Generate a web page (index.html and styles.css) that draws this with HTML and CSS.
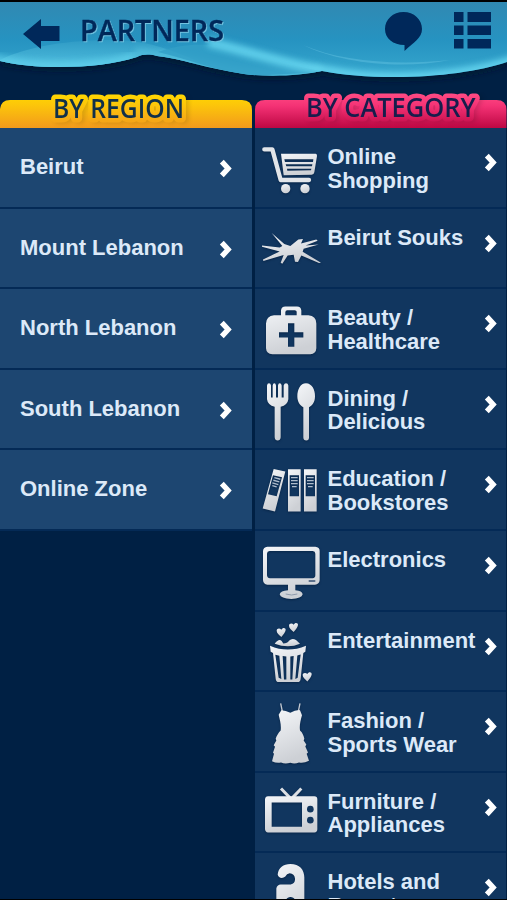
FILE: index.html
```html
<!DOCTYPE html>
<html>

<head>
	<meta charset="utf-8">
	<meta name="viewport" content="width=device-width, initial-scale=1">
	<title>Partners</title>
	<link rel="stylesheet" href="styles.css">
</head>

<body>
	<!-- shared paints and shapes -->
	<svg class="defs">
		<defs>
			<linearGradient id="metal" x1="0" y1="0" x2="0.3" y2="1">
				<stop offset="0" stop-color="#f4f6f9" />
				<stop offset="1" stop-color="#cdd0d5" />
			</linearGradient>
			<symbol id="chevron" viewBox="0 0 12 18">
				<path d="M2.500 2.500 L8.500 9 L2.500 15.500" fill="none" stroke="#fff" stroke-width="5" />
			</symbol>
			<path id="heart" d="M0 15 C-7 9 -14 3 -14 -4 C-14 -11 -5 -13 0 -7 C4 -15 14 -13 13 -6 C12 1 6 8 0 15 Z" />
		</defs>
	</svg>

	<header class="header">
		<svg class="waves" viewBox="0 0 507 98">
			<defs>
				<linearGradient id="sky" x1="0" y1="0" x2="0" y2="1">
					<stop offset="0" stop-color="#3188b1" />
					<stop offset="0.5" stop-color="#2693c1" />
					<stop offset="1" stop-color="#38a9cf" />
				</linearGradient>
				<linearGradient id="leftWave" gradientUnits="userSpaceOnUse" x1="0" y1="38" x2="0" y2="68">
					<stop offset="0" stop-color="#2d98c3" />
					<stop offset="1" stop-color="#50bfdf" />
				</linearGradient>
				<clipPath id="sea">
					<path d="M0 2 H507 V62 C480 71 440 77 395 77 C365 77 344 75 322 71 C300 76 267 77 244 74 C208 69 180 58 157 56 C149 54 143 54 137 57 C115 64 88 67 60 67 C35 67 18 65 0 61 Z" />
				</clipPath>
				<filter id="soft" x="-20%" y="-50%" width="140%" height="200%">
					<feGaussianBlur stdDeviation="3" />
				</filter>
			</defs>
			<rect width="507" height="98" fill="#002044" />
			<path d="M0 61 C18 65 35 67 60 67 C88 67 115 64 137 57 C143 54 149 54 157 56 C180 58 208 69 244 74 C267 77 300 76 322 71 C344 75 365 77 395 77 C440 77 480 71 507 62" fill="none" stroke="#00142b" stroke-width="5" filter="url(#soft)" />
			<g clip-path="url(#sea)">
				<rect width="507" height="80" fill="url(#sky)" />
				<path d="M0 60 C28 46 70 40 112 40 C148 40 170 50 200 62 L60 75 H0 Z" fill="url(#leftWave)" />
				<path d="M-10 59 C18 65 35 67 60 67 C88 67 115 64 137 57" fill="none" stroke="#62d1ec" stroke-width="11" opacity="0.75" filter="url(#soft)" />
				<path d="M135 54 C180 58 208 69 244 74 C267 77 300 76 322 71" fill="none" stroke="#51bddb" stroke-width="12" opacity="0.8" filter="url(#soft)" />
				<!-- darker slope running down under the right wave -->
				<path d="M158 52 C175 46 190 44 208 45 C232 47 255 58 325 72 L250 76 C215 70 190 60 158 52 Z" fill="#329fc7" opacity="0.8" />
				<path d="M208 42 C260 54 290 66 330 71 C350 75 370 77 395 77 C440 77 480 71 517 59" fill="none" stroke="#6bdaf3" stroke-width="9" opacity="0.85" filter="url(#soft)" />
				<path d="M303 45 C340 61 395 66 450 60 C400 70 340 63 303 45" fill="#6bc9e6" opacity="0.4" />
			</g>
			<rect width="507" height="2" fill="#000" />
			<path d="M23 34 L41 19 V26 H59.500 V41 H41 V49 Z" fill="#00285a" />
			<path d="M403.500 12 C414 12 422 19.500 422 29 C422 38 414 42 404.500 51 V45 C393 45 385 38.500 385 29 C385 19.500 393 12 403.500 12 Z" fill="#00285a" />
			<path d="M454 12 H463.500 V22 H454 Z M467.500 12 H491 V22 H467.500 Z M454 25.500 H463.500 V35 H454 Z M467.500 25.500 H491 V35 H467.500 Z M454 39 H463.500 V48.500 H454 Z M467.500 39 H491 V48.500 H467.500 Z" fill="#00285a" />
			<text class="title" x="80" y="41" textLength="144" lengthAdjust="spacingAndGlyphs">PARTNERS</text>
		</svg>
	</header>

	<main class="columns">
		<section class="column region">
			<svg class="tab" viewBox="0 0 252 36">
				<defs>
					<linearGradient id="yellow" gradientUnits="userSpaceOnUse" x1="0" y1="2" x2="0" y2="36">
						<stop offset="0" stop-color="#ffd800" />
						<stop offset="0.35" stop-color="#fcc40b" />
						<stop offset="1" stop-color="#f29a1c" />
					</linearGradient>
				</defs>
				<path d="M0 36 V17 Q1 8 10 8 H242 Q252 8 252 18 V36 Z" fill="url(#yellow)" />
				<text class="tab-title" x="53" y="25.500" stroke="url(#yellow)" fill="#10304a" textLength="131" lengthAdjust="spacingAndGlyphs">BY REGION</text>
			</svg>
			<a class="row"><span class="name">Beirut</span><svg class="arrow"><use href="#chevron" /></svg></a>
			<a class="row"><span class="name">Mount Lebanon</span><svg class="arrow"><use href="#chevron" /></svg></a>
			<a class="row"><span class="name">North Lebanon</span><svg class="arrow"><use href="#chevron" /></svg></a>
			<a class="row"><span class="name">South Lebanon</span><svg class="arrow"><use href="#chevron" /></svg></a>
			<a class="row"><span class="name">Online Zone</span><svg class="arrow"><use href="#chevron" /></svg></a>
		</section>

		<section class="column category">
			<svg class="tab" viewBox="0 0 252 36">
				<defs>
					<linearGradient id="pink" gradientUnits="userSpaceOnUse" x1="0" y1="2" x2="0" y2="36">
						<stop offset="0" stop-color="#ff4a83" />
						<stop offset="0.35" stop-color="#f43275" />
						<stop offset="1" stop-color="#bd0743" />
					</linearGradient>
				</defs>
				<path d="M0 36 V18 Q0 8 10 8 H242 Q252 8 252 18 V36 Z" fill="url(#pink)" />
				<text class="tab-title" x="51" y="25.500" stroke="url(#pink)" fill="#171d4c" textLength="170" lengthAdjust="spacingAndGlyphs">BY CATEGORY</text>
			</svg>

			<a class="row">
				<svg class="icon" viewBox="6 9 210 240">
					<path d="M34 73 H58 L83 165 H168" fill="none" stroke="#e2e5e9" stroke-width="13" stroke-linecap="round" stroke-linejoin="round" />
					<path fill-rule="evenodd" d="M84 86 H188 Q193 87 192 93 L184 142 Q183 149 176 149 L92 151 Z M94 103 L96 111 H180 L181 103 Z M98 118 L100 124 H177 L178 118 Z M102 131 L103 137 L174 136 L175 131 Z" fill="url(#metal)" />
					<circle cx="98" cy="191" r="14" fill="url(#metal)" />
					<circle cx="156" cy="191" r="14" fill="url(#metal)" />
				</svg>
				<span class="name">Online<br>Shopping</span><svg class="arrow"><use href="#chevron" /></svg>
			</a>
			<a class="row">
				<svg class="icon" viewBox="6 250.800 210 240">
					<path d="M56 323 L94 356 L112 362 L136 342 L150 341 L144 354 L190 342 L194 346 L158 360 L197 357 L152 370 L149 379 L204 412 L198 413 L145 390 L135 410 L126 409 L122 388 L104 390 L88 415 L83 412 L92 389 L31 407 L30 402 L80 378 L27 364 L27 360 L80 366 L88 362 Z" fill="url(#metal)" />
				</svg>
				<span class="name">Beirut Souks</span><svg class="arrow"><use href="#chevron" /></svg>
			</a>
			<a class="row">
				<svg class="icon" viewBox="6 12.600 210 240">
					<path fill-rule="evenodd" d="M84 91 V77 Q85 65 97 65 H132 Q144 65 145 77 V91 H166 Q190 93 190 116 V190 Q189 207 172 208 H58 Q40 207 39 190 V116 Q40 93 63 91 Z M97 91 H131 V81 Q131 76 125 76 H103 Q97 76 97 82 Z M105 115 V142 H78 V158 H105 V186 H124 V158 H151 V142 H124 V115 Z" fill="url(#metal)" />
				</svg>
				<span class="name">Beauty /<br>Healthcare</span><svg class="arrow"><use href="#chevron" /></svg>
			</a>
			<a class="row">
				<svg class="icon" viewBox="6 254.400 210 240">
					<path d="M42 301 Q43 294 48 294 Q53 294 54 301 V337 H59 V301 Q60 294 64 294 Q68 294 69 301 V337 H75 V301 Q76 294 80 294 Q85 294 86 301 V337 H92 V301 Q94 294 99 294 Q105 294 106 301 V342 Q104 359 83 365 V456 Q82 466 74 466 Q66 466 65 456 V365 Q44 359 42 342 Z" fill="url(#metal)" />
					<path d="M159 294 C177 294 186 314 186 333 C186 352 177 361 168 366 V457 Q168 466 160 466 Q151 466 151 457 V366 C141 361 133 350 133 333 C133 313 142 294 159 294 Z" fill="url(#metal)" />
				</svg>
				<span class="name">Dining /<br>Delicious</span><svg class="arrow"><use href="#chevron" /></svg>
			</a>
			<a class="row">
				<svg class="icon" viewBox="6 16.200 210 240">
					<path fill-rule="evenodd" d="M105 74 H143 V201 H105 Z M110 92 V155 H138 V92 Z" fill="url(#metal)" />
					<path fill-rule="evenodd" d="M153 74 H191 V201 H153 Z M158 92 V155 H186 V92 Z" fill="url(#metal)" />
					<path fill-rule="evenodd" d="M62 73 L97 81 L66 201 L29 192 Z M60 92 L45 149 L71 155 L87 98 Z" fill="url(#metal)" />
					<path d="M114 99 H134 M114 108 H134 M114 117 H134 M117 126 H131 M162 99 H182 M162 108 H182 M162 117 H182 M165 126 H179 M64 99 L82 104 M61 107 L79 112 M58 115 L76 120 M58 123 L71 127" stroke="#aebccc" stroke-width="4" />
				</svg>
				<span class="name">Education /<br>Bookstores</span><svg class="arrow"><use href="#chevron" /></svg>
			</a>
			<a class="row">
				<svg class="icon" viewBox="6 258 210 240">
					<path fill-rule="evenodd" d="M43 305 H187 Q200 306 200 318 V405 Q199 418 186 419 H127 V436 Q148 438 149 448 Q146 461 115 462 Q83 461 80 448 Q82 438 105 436 V419 H43 Q31 418 30 405 V318 Q31 306 43 305 Z M50 318 Q42 319 42 326 V391 Q43 400 51 400 H179 Q187 399 187 391 V326 Q187 319 179 318 Z" fill="url(#metal)" />
					<path d="M169 408 H185" stroke="#334d70" stroke-width="5" stroke-linecap="round" />
					<path d="M98 447 Q116 453 133 447" fill="none" stroke="#8f9bac" stroke-width="3" />
				</svg>
				<span class="name">Electronics</span><svg class="arrow"><use href="#chevron" /></svg>
			</a>
			<a class="row">
				<svg class="icon" viewBox="6 19.800 210 240">
					<g fill="url(#metal)">
						<use href="#heart" x="85" y="80" />
						<use href="#heart" x="122" y="65" />
						<use href="#heart" x="163" y="213" />
						<path d="M65 115 Q78 98 86 107 L91 114 Q103 114 108 106 Q118 96 129 104 L141 115 Q106 130 65 115 Z" />
						<path fill-rule="evenodd" d="M51 121 Q104 144 159 121 L157 139 L151 143 L143 220 Q142 230 134 230 H77 Q69 230 68 220 L60 143 L53 139 Z M67 148 L77 217 L85 221 L79 151 Z M89 152 L93 222 H100 V153 Z M112 153 V222 H118 L122 152 Z M133 150 L127 221 L134 217 L143 147 Z" />
					</g>
				</svg>
				<span class="name">Entertainment</span><svg class="arrow"><use href="#chevron" /></svg>
			</a>
			<a class="row">
				<svg class="icon" viewBox="6 261.600 210 240">
					<path d="M83 296 L88 320 M141 296 L136 320" stroke="#c3c9d1" stroke-width="4" />
					<path d="M85 316 Q98 317 112 324 Q127 315 141 316 L147 331 C142 349 139 362 141 377 C149 384 152 393 154 402 L152 407 L160 419 L157 425 L165 443 L161 447 L168 468 Q152 476 138 473 Q125 479 112 474 Q96 479 84 473 Q70 476 57 469 L63 447 L60 444 L66 426 L62 421 L70 407 L68 402 C71 393 76 384 83 377 C85 360 81 348 77 330 Z" fill="url(#metal)" />
				</svg>
				<span class="name">Fashion /<br>Sports Wear</span><svg class="arrow"><use href="#chevron" /></svg>
			</a>
			<a class="row">
				<svg class="icon" viewBox="6 23.400 210 240">
					<path d="M84 70 L111 98 M145 70 L118 98" stroke="#dcdfe4" stroke-width="9" />
					<path fill-rule="evenodd" d="M45 93 H184 Q193 93 193 102 V192 Q193 201 184 202 H45 Q37 201 36 192 V102 Q37 93 45 93 Z M56 112 V185 H147 V112 Z" fill="url(#metal)" />
					<circle cx="172" cy="132" r="10" fill="#12365e" />
					<circle cx="172" cy="165" r="10" fill="#12365e" />
				</svg>
				<span class="name">Furniture /<br>Appliances</span><svg class="arrow"><use href="#chevron" /></svg>
			</a>
			<a class="row">
				<svg class="icon" viewBox="6 265.200 210 240">
					<path fill-rule="evenodd" d="M74 330 C76 309 91 298 112 298 C140 298 154 315 154 339 V480 H70 V372 Q72 361 83 360 H113 Q127 356 126 342 Q124 327 110 326 Q101 327 97 336 C89 343 76 341 74 330 Z M112 397 a15 15 0 1 0 1 0 Z" fill="url(#metal)" />
				</svg>
				<span class="name">Hotels and<br>Resorts</span><svg class="arrow"><use href="#chevron" /></svg>
			</a>
		</section>
	</main>
</body>

</html>
```
FILE: styles.css
```css
* {
	box-sizing: border-box;
}

body {
	margin: 0;
	height: 900px;
	overflow: hidden;
	background-color: #002044;
	border-bottom: 1px solid #000;
	font-family: "Liberation Sans", Arial, sans-serif;
	display: flex;
	flex-direction: column;
}

.defs {
	display: block;
	flex: none;
	width: 0;
	height: 0;
}

.header {
	height: 92px;
	flex: none;
}

.waves {
	display: block;
	width: 507px;
	height: 98px;
}

.title {
	font: 600 29px "Open Sans", sans-serif;
	fill: #00285a;
	stroke: #00285a;
	stroke-width: 0.4px;
	filter: drop-shadow(1px 1px 0 #72c3e0);
}

.columns {
	display: flex;
	gap: 2.5px;
	flex: 1;
	min-height: 0;
	overflow: hidden;
}

.column {
	flex: none;
}

.region {
	width: 252px;
}

.category {
	width: 251.5px;
}

.tab {
	display: block;
	width: 100%;
	height: 36px;
	overflow: visible;
}

.tab-title {
	font: 600 26.5px "Open Sans", sans-serif;
	stroke-width: 9px;
	stroke-linejoin: round;
	paint-order: stroke;
	filter: drop-shadow(3px 1px 2px rgba(0, 0, 0, 0.12));
}

.row {
	display: flex;
	height: 80.6px;
	border-bottom: 2px solid #042a56;
	color: #dce9f8;
	font-size: 22px;
	font-weight: bold;
	line-height: 23.7px;
}

.name {
	flex: 1;
	white-space: nowrap;
}

.arrow {
	flex: none;
	width: 13px;
	height: 19px;
}

.region .row {
	background-color: #1d4671;
	padding: 27px 20px 0 20px;
}

.region .arrow {
	margin-top: 4px;
}

.category .row {
	background-color: #11365f;
	padding-right: 9px;
}

.category .icon {
	flex: none;
	width: 70px;
	height: 80px;
	margin-right: 3px;
	filter: drop-shadow(0 1px 1px #082548);
}

.category .name {
	padding-top: 17px;
}

.category .arrow {
	margin-top: 25px;
}
```
